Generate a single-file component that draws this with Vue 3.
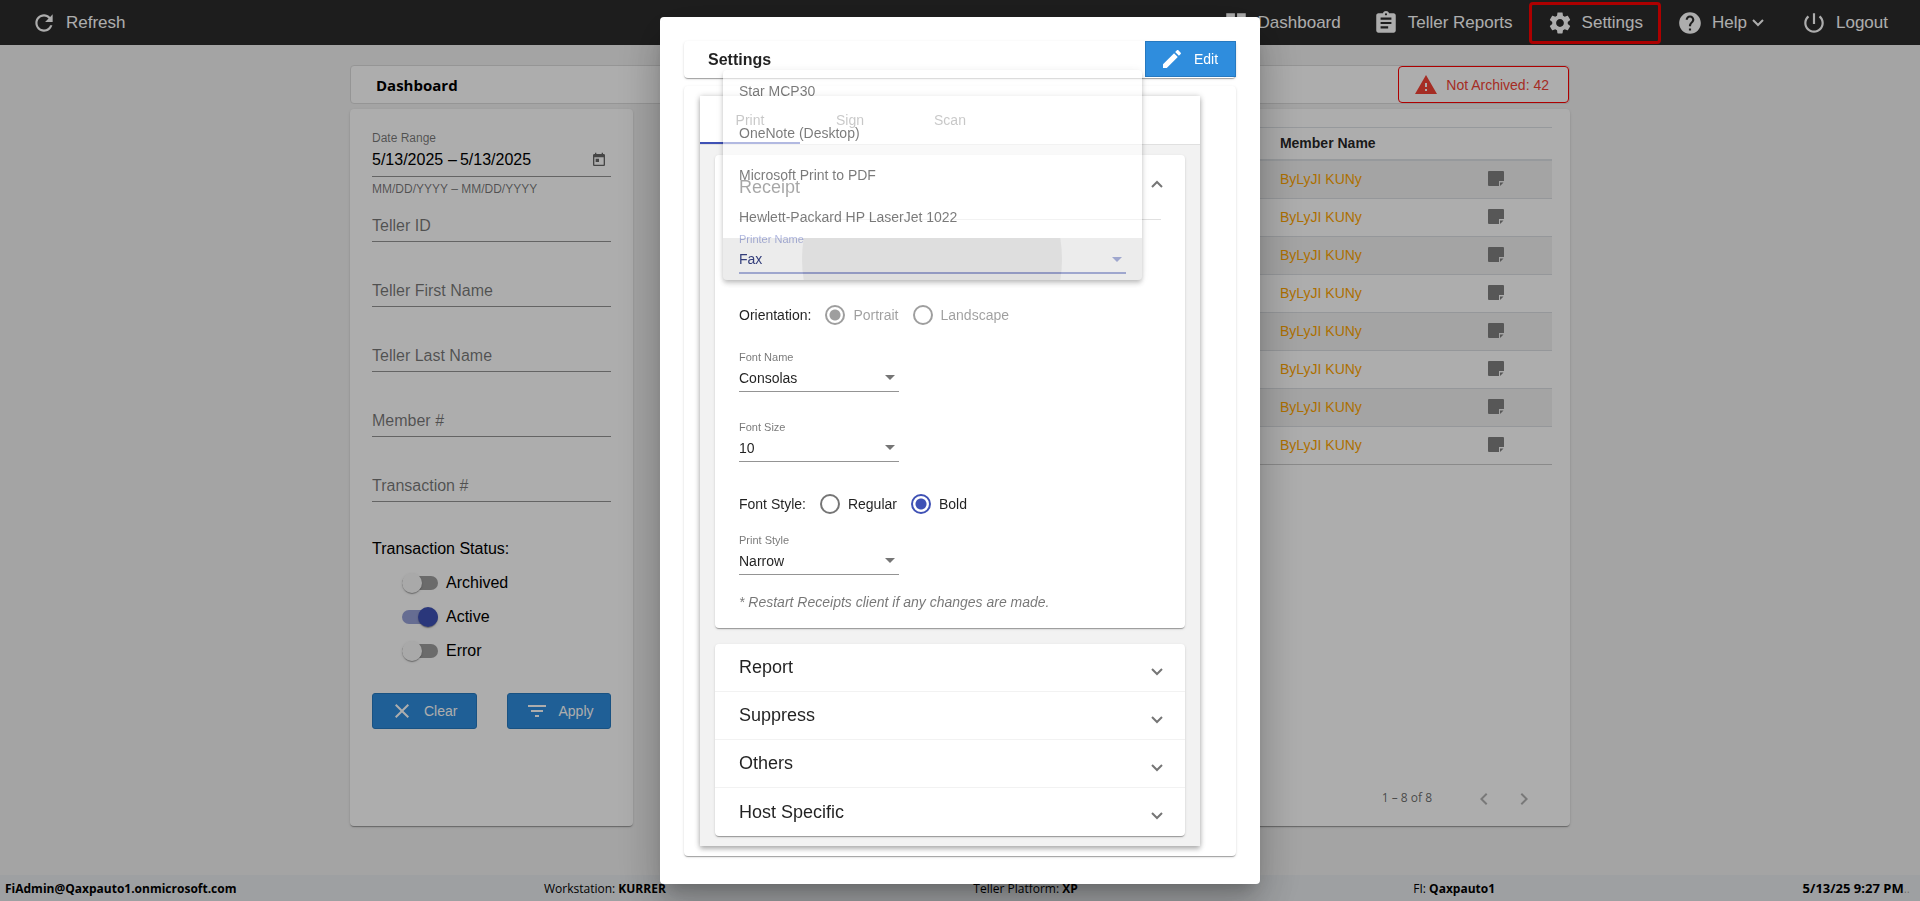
<script setup>
import { ref } from 'vue'

const navItems = [
  { label: 'Dashboard', icon: 'M3 13h8V3H3v10zm0 8h8v-6H3v6zm10 0h8V11h-8v10zm0-18v6h8V3h-8z' },
  {
    label: 'Teller Reports',
    icon: 'M19 3h-4.18C14.4 1.84 13.3 1 12 1s-2.4.84-2.82 2H5c-1.1 0-2 .9-2 2v14c0 1.1.9 2 2 2h14c1.1 0 2-.9 2-2V5c0-1.1-.9-2-2-2zm-7 0c.55 0 1 .45 1 1s-.45 1-1 1-1-.45-1-1 .45-1 1-1zm2 14H7v-2h7v2zm3-4H7v-2h10v2zm0-4H7V7h10v2z'
  },
  {
    label: 'Settings',
    active: true,
    icon: 'M19.14 12.94c.04-.3.06-.61.06-.94 0-.32-.02-.64-.07-.94l2.03-1.58c.18-.14.23-.41.12-.61l-1.92-3.32c-.12-.22-.37-.29-.59-.22l-2.39.96c-.5-.38-1.03-.7-1.62-.94L14.4 2.81c-.04-.24-.24-.41-.48-.41h-3.84c-.24 0-.43.17-.47.41L9.25 5.35c-.59.24-1.13.57-1.62.94l-2.39-.96c-.22-.08-.47 0-.59.22L2.74 8.87c-.12.21-.08.47.12.61l2.03 1.58c-.05.3-.09.63-.09.94s.02.64.07.94l-2.03 1.58c-.18.14-.23.41-.12.61l1.92 3.32c.12.22.37.29.59.22l2.39-.96c.5.38 1.03.7 1.62.94l.36 2.54c.05.24.24.41.48.41h3.84c.24 0 .44-.17.47-.41l.36-2.54c.59-.24 1.13-.56 1.62-.94l2.39.96c.22.08.47 0 .59-.22l1.92-3.32c.12-.22.07-.47-.12-.61l-2.01-1.58zM12 15.6c-1.98 0-3.6-1.62-3.6-3.6s1.62-3.6 3.6-3.6 3.6 1.62 3.6 3.6-1.62 3.6-3.6 3.6z'
  },
  {
    label: 'Help',
    menu: true,
    icon: 'M12 2C6.48 2 2 6.48 2 12s4.48 10 10 10 10-4.48 10-10S17.52 2 12 2zm1 17h-2v-2h2v2zm2.07-7.75l-.9.92C13.45 12.9 13 13.5 13 15h-2v-.5c0-1.1.45-2.1 1.17-2.83l1.24-1.26c.37-.36.59-.86.59-1.41 0-1.1-.9-2-2-2s-2 .9-2 2H8c0-2.21 1.79-4 4-4s4 1.79 4 4c0 .88-.36 1.68-.93 2.25z'
  },
  {
    label: 'Logout',
    icon: 'M13 3h-2v10h2V3zm4.83 2.17l-1.42 1.42C17.99 7.86 19 9.81 19 12c0 3.87-3.13 7-7 7s-7-3.13-7-7c0-2.19 1.01-4.14 2.58-5.42L6.17 5.17C4.23 6.82 3 9.26 3 12c0 4.97 4.03 9 9 9s9-4.03 9-9c0-2.74-1.23-5.18-3.17-6.83z'
  }
]

const startDate = ref('5/13/2025')
const endDate = ref('5/13/2025')
const filters = ['Teller ID', 'Teller First Name', 'Teller Last Name', 'Member #', 'Transaction #']
const statuses = ref([
  { label: 'Archived', on: false },
  { label: 'Active', on: true },
  { label: 'Error', on: false }
])
const members = Array(8).fill('ByLyJI KUNy')

const tabs = ['Print', 'Sign', 'Scan']
const printers = ['Star MCP30', 'OneNote (Desktop)', 'Microsoft Print to PDF', 'Hewlett-Packard HP LaserJet 1022', 'Fax']
const printer = ref('Fax')
const fontName = ref('Consolas')
const fontSize = ref('10')
const fontStyle = ref('Bold')
const printStyle = ref('Narrow')
const orientation = ref('Portrait')
const sections = ['Report', 'Suppress', 'Others', 'Host Specific']
</script>

<template>
  <div class="page">
    <header class="topbar">
      <button class="nav-item">
        <svg viewBox="0 0 24 24"><path d="M17.65 6.35C16.2 4.9 14.21 4 12 4c-4.42 0-7.99 3.58-7.99 8s3.57 8 7.99 8c3.73 0 6.84-2.55 7.73-6h-2.08c-.82 2.33-3.04 4-5.65 4-3.31 0-6-2.69-6-6s2.69-6 6-6c1.66 0 3.14.69 4.22 1.78L13 11h7V4l-2.35 2.35z" /></svg>
        Refresh
      </button>
      <nav>
        <button v-for="item in navItems" :key="item.label" class="nav-item" :class="{ active: item.active }">
          <svg viewBox="0 0 24 24"><path :d="item.icon" /></svg>
          {{ item.label }}
          <svg v-if="item.menu" class="caret" viewBox="0 0 12 8"><path d="M1 1l5 5 5-5" /></svg>
        </button>
      </nav>
    </header>

    <main class="content">
      <div class="titlebar">
        <h1>Dashboard</h1>
        <button class="alert">
          <svg viewBox="0 0 24 24"><path d="M1 21h22L12 2 1 21zm12-3h-2v-2h2v2zm0-4h-2v-4h2v4z" /></svg>
          Not Archived: 42
        </button>
      </div>

      <div class="columns">
        <form class="card filter" @submit.prevent>
          <label class="date-label" for="start">Date Range</label>
          <div class="dates">
            <input id="start" v-model="startDate" type="text" />
            <span>–</span>
            <input v-model="endDate" type="text" aria-label="End date" />
            <button type="button" class="calendar" aria-label="Open calendar">
              <svg viewBox="0 0 24 24"><path d="M19 3h-1V1h-2v2H8V1H6v2H5c-1.11 0-1.99.9-1.99 2L3 19c0 1.1.89 2 2 2h14c1.1 0 2-.9 2-2V5c0-1.1-.9-2-2-2zm0 16H5V8h14v11zM7 10h5v5H7z" /></svg>
            </button>
          </div>
          <p class="hint">MM/DD/YYYY – MM/DD/YYYY</p>
          <div class="fields">
            <input v-for="f in filters" :key="f" type="text" :placeholder="f" :aria-label="f" />
          </div>
          <p class="status-title">Transaction Status:</p>
          <label v-for="s in statuses" :key="s.label" class="toggle">
            <input v-model="s.on" type="checkbox" />{{ s.label }}
          </label>
          <div class="actions">
            <button type="button" class="primary">
              <svg viewBox="0 0 24 24"><path d="M19 6.41L17.59 5 12 10.59 6.41 5 5 6.41 10.59 12 5 17.59 6.41 19 12 13.41 17.59 19 19 17.59 13.41 12z" /></svg>
              Clear
            </button>
            <button type="submit" class="primary">
              <svg viewBox="0 0 24 24"><path d="M10 18h4v-2h-4v2zM3 6v2h18V6H3zm3 7h12v-2H6v2z" /></svg>
              Apply
            </button>
          </div>
        </form>

        <section class="card results">
          <table>
            <colgroup><col class="c-main" /><col class="c-member" /><col /></colgroup>
            <thead>
              <tr><th></th><th>Member Name</th><th></th></tr>
            </thead>
            <tbody>
              <tr v-for="(m, i) in members" :key="i">
                <td></td>
                <td>{{ m }}</td>
                <td>
                  <svg class="note" viewBox="0 0 16 16"><path d="M1 0h14a1 1 0 0 1 1 1v9h-5v5H1a1 1 0 0 1-1-1V1a1 1 0 0 1 1-1zM12 11.500h3.500L12 15z" /></svg>
                </td>
              </tr>
            </tbody>
          </table>
          <div class="pager">
            <span>1 – 8 of 8</span>
            <button aria-label="Previous page"><svg viewBox="0 0 24 24"><path d="M15.410 7.410L14 6l-6 6 6 6 1.410-1.410L10.830 12z" /></svg></button>
            <button aria-label="Next page"><svg viewBox="0 0 24 24"><path d="M10 6L8.590 7.410 13.170 12l-4.580 4.590L10 18l6-6z" /></svg></button>
          </div>
        </section>
      </div>
    </main>

    <footer class="statusbar">
      <b>FiAdmin@Qaxpauto1.onmicrosoft.com</b>
      <span>Workstation: <b>KURRER</b></span>
      <span class="platform">Teller Platform: <b>XP</b></span>
      <span>FI: <b>Qaxpauto1</b></span>
      <span><b class="clock">5/13/25 9:27 PM</b><span class="dots">..</span></span>
    </footer>

    <div class="backdrop">
      <div class="dialog" role="dialog" aria-label="Settings">
        <div class="card dialog-title">
          <h2>Settings</h2>
          <button class="primary edit">
            <svg viewBox="0 0 24 24"><path d="M3 17.250V21h3.750L17.810 9.940l-3.750-3.750L3 17.250zM20.710 7.040c.39-.39.39-1.020 0-1.410l-2.340-2.340c-.39-.39-1.020-.39-1.410 0l-1.830 1.830 3.750 3.750 1.830-1.830z" /></svg>
            Edit
          </button>
        </div>
        <div class="card dialog-body">
          <div class="panel">
            <div class="tabs" role="tablist">
              <button v-for="(t, i) in tabs" :key="t" role="tab" :aria-selected="i === 0" :class="{ selected: i === 0 }">{{ t }}</button>
            </div>
            <div class="sections">
              <section class="card">
                <button class="section-head open">
                  Receipt
                  <svg class="chevron" viewBox="0 0 12 8"><path d="M1 7l5-5 5 5" /></svg>
                </button>
                <div class="receipt">
                  <div class="field wide">
                    <label for="printer">Printer Name</label>
                    <select id="printer" v-model="printer"><option v-for="p in printers" :key="p">{{ p }}</option></select>
                    <ul class="menu" role="listbox" aria-label="Printer Name">
                      <li v-for="p in printers" :key="p" role="option" :class="{ chosen: p === printer }" :aria-selected="p === printer">
                        <span>{{ p }}</span>
                      </li>
                    </ul>
                  </div>
                  <div class="radios orientation">
                    <span>Orientation:</span>
                    <label v-for="o in ['Portrait', 'Landscape']" :key="o" class="off">
                      <input v-model="orientation" type="radio" name="orientation" :value="o" disabled />{{ o }}
                    </label>
                  </div>
                  <div class="field">
                    <label for="fname">Font Name</label>
                    <select id="fname" v-model="fontName"><option>Consolas</option></select>
                  </div>
                  <div class="field second">
                    <label for="fsize">Font Size</label>
                    <select id="fsize" v-model="fontSize"><option>10</option></select>
                  </div>
                  <div class="radios style">
                    <span>Font Style:</span>
                    <label v-for="o in ['Regular', 'Bold']" :key="o">
                      <input v-model="fontStyle" type="radio" name="style" :value="o" />{{ o }}
                    </label>
                  </div>
                  <div class="field">
                    <label for="pstyle">Print Style</label>
                    <select id="pstyle" v-model="printStyle"><option>Narrow</option></select>
                  </div>
                  <p class="restart">* Restart Receipts client if any changes are made.</p>
                </div>
              </section>
              <div class="card accordion">
                <button v-for="s in sections" :key="s" class="section-head">
                  {{ s }}
                  <svg class="chevron" viewBox="0 0 12 8"><path d="M1 1l5 5 5-5" /></svg>
                </button>
              </div>
            </div>
          </div>
        </div>
      </div>
    </div>
  </div>
</template>

<style>
body {
  margin: 0;
  background: #f2f2f2;
}
</style>

<style scoped>
* {
  box-sizing: border-box;
}
.page {
  min-height: 100vh;
  display: flex;
  flex-direction: column;
  font-family: 'Liberation Sans', Arial, sans-serif;
  font-size: 14px;
  color: rgba(0, 0, 0, 0.87);
}
h1, h2, p, ul {
  margin: 0;
  padding: 0;
}
button, input, select {
  font: inherit;
  color: inherit;
  background: none;
  border: 0;
  padding: 0;
  margin: 0;
  outline: 0;
}
svg {
  fill: currentColor;
  flex: none;
}
.topbar {
  height: 45px;
  display: flex;
  justify-content: space-between;
  background: #2c2c2c;
  padding: 0 16px 0 15px;
  color: #fff;
  font-size: 17px;
}
nav {
  display: flex;
  align-items: center;
}
.nav-item {
  display: flex;
  align-items: center;
  gap: 9px;
  padding: 0 16px;
}
.nav-item svg {
  width: 26px;
  height: 26px;
}
.nav-item.active {
  height: 42px;
  border: 3px solid #f00;
  border-radius: 4px;
  padding: 0 15px;
}
.nav-item .caret {
  width: 12px;
  height: 8px;
  margin: 0 5px 0 -4px;
}
.caret, .chevron {
  fill: none;
  stroke: currentColor;
  stroke-width: 2;
}
.content {
  flex: 1;
  display: flex;
  flex-direction: column;
  width: calc(100% - 40px);
  max-width: 1220px;
  margin: 0 auto;
  padding: 20px 0 49px;
}
.titlebar {
  height: 39px;
  display: flex;
  align-items: center;
  justify-content: space-between;
  background: #fff;
  border: 1px solid #dcdcdc;
  border-radius: 4px;
  padding-left: 25px;
}
h1 {
  font: bold 15px 'Open Sans', 'Noto Sans', sans-serif;
  color: #000;
}
.alert {
  height: 37px;
  display: flex;
  align-items: center;
  gap: 8px;
  border: 1px solid #f00;
  border-radius: 4px;
  padding: 0 19px 0 15px;
  color: #f44336;
}
.alert svg {
  width: 24px;
  height: 24px;
}
.columns {
  flex: 1;
  display: grid;
  grid-template-columns: 283px 1fr;
  gap: 32px;
  margin-top: 5px;
}
.card {
  background: #fff;
  border-radius: 4px;
  box-shadow: 0 2px 1px -1px rgba(0, 0, 0, 0.2), 0 1px 1px rgba(0, 0, 0, 0.14), 0 1px 3px rgba(0, 0, 0, 0.12);
}
.filter {
  padding: 22px;
  font-size: 16px;
  color: #000;
}
.date-label {
  display: block;
  font-size: 12px;
  line-height: 14px;
  color: rgba(0, 0, 0, 0.54);
}
.dates {
  display: flex;
  align-items: center;
  gap: 3px;
  height: 32px;
  padding-bottom: 1px;
  border-bottom: 1px solid rgba(0, 0, 0, 0.42);
}
.dates input {
  width: 73px;
}
.calendar {
  margin: 0 4px 0 auto;
  height: 16px;
  color: rgba(0, 0, 0, 0.6);
}
.calendar svg {
  width: 16px;
  height: 16px;
}
.hint {
  margin-top: 5px;
  font-size: 12px;
  line-height: 14px;
  color: rgba(0, 0, 0, 0.54);
}
.fields {
  display: flex;
  flex-direction: column;
  gap: 33px;
  margin-top: 14px;
}
.fields input {
  height: 32px;
  border-bottom: 1px solid rgba(0, 0, 0, 0.42);
}
.fields input::placeholder {
  color: rgba(0, 0, 0, 0.54);
  opacity: 1;
}
.status-title {
  margin: 37px 0 7px;
  line-height: 20px;
}
.toggle {
  display: flex;
  align-items: center;
  gap: 8px;
  height: 34px;
  padding-left: 30px;
}
.toggle input {
  appearance: none;
  position: relative;
  width: 36px;
  height: 14px;
  border-radius: 7px;
  background: rgba(0, 0, 0, 0.38);
}
.toggle input::before {
  content: '';
  position: absolute;
  left: 0;
  top: -3px;
  width: 20px;
  height: 20px;
  border-radius: 50%;
  background: #fafafa;
  box-shadow: 0 2px 1px -1px rgba(0, 0, 0, 0.2), 0 1px 1px rgba(0, 0, 0, 0.14), 0 1px 3px rgba(0, 0, 0, 0.12);
}
.toggle input:checked {
  background: rgba(63, 81, 181, 0.54);
}
.toggle input:checked::before {
  left: 16px;
  background: #3f51b5;
}
.actions {
  display: grid;
  grid-template-columns: 1fr 1fr;
  gap: 30px;
  margin-top: 25px;
}
.primary {
  height: 36px;
  display: flex;
  align-items: center;
  gap: 10px;
  padding-left: 17px;
  background: #2f8ddd;
  border: 1px solid #2679c0;
  border-radius: 3px;
  color: #fff;
  font-size: 14px;
}
.primary svg {
  width: 24px;
  height: 24px;
}
.results {
  display: flex;
  flex-direction: column;
  justify-content: space-between;
  padding: 18px;
}
table {
  width: 100%;
  table-layout: fixed;
  border-collapse: separate;
  border-spacing: 0;
}
.c-main {
  width: 68%;
}
.c-member {
  width: 24%;
}
th {
  height: 34px;
  padding: 0 6px 2px;
  text-align: left;
  border-top: 1px solid #dee2e6;
  border-bottom: 2px solid #dee2e6;
}
td {
  height: 38px;
  padding: 0 6px 2px;
  border-bottom: 1px solid #dcdfe3;
  color: #ffa500;
}
tbody tr:nth-child(odd) {
  background: rgba(0, 0, 0, 0.05);
}
tbody tr:last-child td {
  border-color: #ccc;
}
.note {
  display: block;
  width: 16px;
  height: 16px;
  color: #808080;
}
.pager {
  display: flex;
  align-items: center;
  justify-content: flex-end;
  gap: 16px;
  padding-right: 16px;
  margin-bottom: -3px;
  font: 12px 'Open Sans', 'Noto Sans', sans-serif;
  color: rgba(0, 0, 0, 0.6);
}
.pager span {
  margin-right: 24px;
  padding-bottom: 4px;
}
.pager button {
  width: 24px;
  height: 24px;
  color: rgba(0, 0, 0, 0.3);
}
.pager svg {
  width: 24px;
  height: 24px;
}
.statusbar {
  height: 26px;
  display: flex;
  align-items: center;
  justify-content: space-between;
  padding: 0 10px 0 5px;
  background: #e9ecef;
  font: 12px 'Open Sans', 'Noto Sans', sans-serif;
  color: #000;
}
.platform {
  padding-right: 28px;
}
.clock {
  font-size: 13px;
}
.dots {
  color: rgba(0, 0, 0, 0.3);
}
.backdrop {
  position: fixed;
  inset: 0;
  display: flex;
  align-items: center;
  justify-content: center;
  background: rgba(0, 0, 0, 0.32);
}
.dialog {
  width: 600px;
  padding: 24px 24px 28px;
  background: #fff;
  border-radius: 4px;
  box-shadow: 0 11px 15px -7px rgba(0, 0, 0, 0.2), 0 24px 38px 3px rgba(0, 0, 0, 0.14), 0 9px 46px 8px rgba(0, 0, 0, 0.12);
}
.dialog-title {
  height: 37px;
  display: flex;
  align-items: flex-start;
  justify-content: space-between;
  padding-left: 24px;
}
h2 {
  font-size: 16px;
  line-height: 37px;
}
.edit {
  width: 91px;
  border-radius: 0;
  padding-left: 14px;
}
.dialog-body {
  margin-top: 8px;
  padding: 10px 36px 10px 16px;
}
.panel {
  background: #f2f2f2;
  box-shadow: 0 3px 5px rgba(0, 0, 0, 0.25), 0 0 6px rgba(0, 0, 0, 0.18);
}
.tabs {
  display: flex;
  height: 49px;
  background: #fff;
  border-bottom: 1px solid rgba(0, 0, 0, 0.12);
}
.tabs button {
  width: 100px;
  padding-top: 2px;
  color: rgba(0, 0, 0, 0.55);
  border-bottom: 2px solid transparent;
}
.tabs .selected {
  border-color: #3f51b5;
}
.sections {
  padding: 10px 15px;
}
.section-head {
  width: 100%;
  height: 48px;
  display: flex;
  align-items: center;
  justify-content: space-between;
  padding: 0 22px 0 24px;
  font-size: 18px;
}
.chevron {
  width: 12px;
  height: 8px;
  margin-top: 8px;
  color: rgba(0, 0, 0, 0.54);
}
.open {
  height: 64px;
}
.open .chevron {
  margin: 0 0 6px;
}
.receipt {
  margin: 0 24px;
  padding: 12px 0 16px;
  border-top: 1px solid rgba(0, 0, 0, 0.12);
}
.field {
  position: relative;
  width: 160px;
}
.field.wide {
  width: auto;
  margin-right: 35px;
}
.field label {
  display: block;
  padding-top: 1px;
  font-size: 11px;
  line-height: 13px;
  color: rgba(0, 0, 0, 0.54);
}
.field select {
  appearance: none;
  display: block;
  width: 100%;
  height: 28px;
  border-bottom: 1px solid rgba(0, 0, 0, 0.42);
}
.field::after {
  content: '';
  position: absolute;
  right: 4px;
  bottom: 12px;
  border: 5px solid transparent;
  border-top-color: rgba(0, 0, 0, 0.54);
  border-bottom: 0;
}
.wide label {
  color: #3f51b5;
}
.wide select {
  border-bottom: 2px solid #3f51b5;
}
.wide::after {
  border-top-color: #3f51b5;
}
.menu {
  position: absolute;
  z-index: 2;
  left: -16px;
  right: -16px;
  bottom: -6px;
  list-style: none;
  background: #fff;
  border-radius: 4px;
  overflow: hidden;
  opacity: 0.6;
  box-shadow: 0 2px 4px -1px rgba(0, 0, 0, 0.3), 0 4px 5px rgba(0, 0, 0, 0.2), 0 1px 10px rgba(0, 0, 0, 0.12);
}
.menu li {
  position: relative;
  height: 42px;
  padding: 0 16px;
  line-height: 42px;
}
.menu .chosen {
  background: rgba(0, 0, 0, 0.12);
  color: #3f51b5;
  overflow: hidden;
}
.chosen::before {
  content: '';
  position: absolute;
  left: 79px;
  top: -109px;
  width: 260px;
  height: 260px;
  border-radius: 50%;
  background: rgba(0, 0, 0, 0.1);
}
.radios {
  display: flex;
  align-items: center;
  gap: 14px;
  height: 20px;
}
.radios label {
  display: flex;
  align-items: center;
  gap: 8px;
}
.radios input {
  appearance: none;
  width: 20px;
  height: 20px;
  border: 2px solid rgba(0, 0, 0, 0.54);
  border-radius: 50%;
}
.radios input:checked {
  border-color: #3f51b5;
  background: radial-gradient(circle, #3f51b5 5px, transparent 6px);
}
.radios .off {
  color: rgba(0, 0, 0, 0.38);
}
.radios input:disabled {
  border-color: rgba(0, 0, 0, 0.38);
}
.radios input:checked:disabled {
  background: radial-gradient(circle, rgba(0, 0, 0, 0.38) 5px, transparent 6px);
}
.orientation {
  margin: 31px 0 25px;
}
.second {
  margin-top: 28px;
}
.style {
  margin: 32px 0 19px;
}
.restart {
  margin-top: 17px;
  line-height: 20px;
  font-style: italic;
  color: rgba(0, 0, 0, 0.54);
}
.accordion {
  margin-top: 16px;
}
.accordion .section-head:not(:last-child) {
  border-bottom: 1px solid #f2f2f2;
}
</style>
